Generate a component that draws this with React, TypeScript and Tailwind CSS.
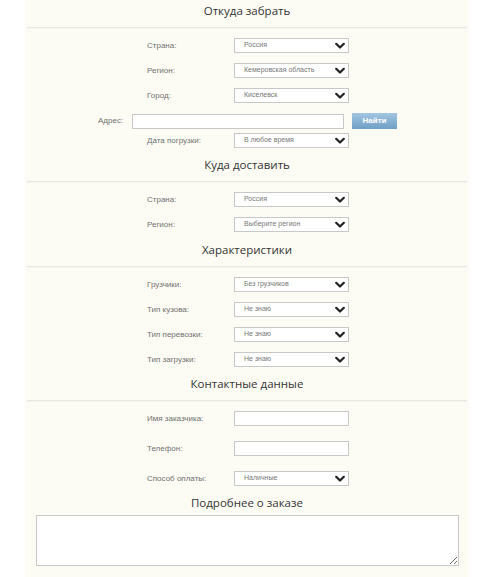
import React from 'react';

const Chevron: React.FC = () => (
  <svg width="10" height="7" viewBox="0 0 10 7" className="absolute right-[3px] top-1/2 -translate-y-1/2">
    <polyline points="1.2,1.2 5,5 8.8,1.2" fill="none" stroke="#222" strokeWidth="2.2" strokeLinecap="round" strokeLinejoin="round" />
  </svg>
);

const Select: React.FC<{ value: string }> = ({ value }) => (
  <div className="relative w-[115px] h-[15px] bg-white border border-[#c8c8c8] flex items-center pl-[9px] text-[7px] text-[#777]">
    <span>{value}</span>
    <Chevron />
  </div>
);

const TextInput: React.FC<{ width?: string; height?: string }> = ({ width = 'w-[115px]', height = 'h-[15px]' }) => (
  <div className={`${width} ${height} bg-white border border-[#c8c8c8]`} />
);

const Label: React.FC<{ text: string }> = ({ text }) => (
  <span className="w-[87px] shrink-0 text-[8px] text-[#707070]">{text}</span>
);

const Row: React.FC<{ label: string; children: React.ReactNode; className?: string }> = ({ label, children, className = '' }) => (
  <div className={`flex items-center h-[15px] pl-[122px] ${className}`}>
    <Label text={label} />
    {children}
  </div>
);

const Title: React.FC<{ text: string; className?: string }> = ({ text, className = '' }) => (
  <div className={className}>
    <div className="h-[22px] flex items-center justify-center text-[11.5px] text-[#333]">{text}</div>
    <div className="mx-[2px] mt-[5px] h-px bg-[#e9e7e0] shadow-[0_1px_0_#f6f4ee]" />
  </div>
);

const sans = { fontFamily: '"Liberation Sans", sans-serif' };

export default function App() {
  return (
    <div className="min-h-[577px] bg-white" style={{ fontFamily: '"Open Sans", "Liberation Sans", sans-serif' }}>
      <div className="ml-[25px] w-[444px] min-h-[577px] bg-[#fdfcf4]">
        {/* Откуда забрать */}
        <Title text="Откуда забрать" />
        <div className="mt-[10px] flex flex-col gap-[10px]" style={sans}>
          <Row label="Страна:"><Select value="Россия" /></Row>
          <Row label="Регион:"><Select value="Кемеровская область" /></Row>
          <Row label="Город:"><Select value="Киселевск" /></Row>
        </div>
        <div className="mt-[10px] flex items-center pl-[73px]" style={sans}>
          <span className="w-[34px] text-[8px] text-[#707070]">Адрес:</span>
          <TextInput width="w-[212px]" />
          <button className="ml-[8px] w-[45px] h-[16px] bg-gradient-to-b from-[#a3c6e0] to-[#6f9fc6] text-white text-[8px] font-bold">
            Найти
          </button>
        </div>
        <div className="mt-[4px]" style={sans}>
          <Row label="Дата погрузки:"><Select value="В любое время" /></Row>
        </div>

        {/* Куда доставить */}
        <Title text="Куда доставить" className="mt-[6px]" />
        <div className="mt-[10px] flex flex-col gap-[10px]" style={sans}>
          <Row label="Страна:"><Select value="Россия" /></Row>
          <Row label="Регион:"><Select value="Выберите регион" /></Row>
        </div>

        {/* Характеристики */}
        <Title text="Характеристики" className="mt-[7px]" />
        <div className="mt-[10px] flex flex-col gap-[10px]" style={sans}>
          <Row label="Грузчики:"><Select value="Без грузчиков" /></Row>
          <Row label="Тип кузова:"><Select value="Не знаю" /></Row>
          <Row label="Тип перевозки:"><Select value="Не знаю" /></Row>
          <Row label="Тип загрузки:"><Select value="Не знаю" /></Row>
        </div>

        {/* Контактные данные */}
        <Title text="Контактные данные" className="mt-[6px]" />
        <div className="mt-[10px] flex flex-col gap-[15px]" style={sans}>
          <Row label="Имя заказчика:"><TextInput /></Row>
          <Row label="Телефон:"><TextInput /></Row>
          <Row label="Способ оплаты:"><Select value="Наличные" /></Row>
        </div>

        {/* Подробнее о заказе */}
        <div className="mt-[6px] h-[22px] flex items-center justify-center text-[11.5px] text-[#333]">Подробнее о заказе</div>
        <div className="mt-px pl-[11px]">
          <textarea className="block w-[423px] h-[51px] bg-white border border-[#c8c8c8] outline-none" />
        </div>
      </div>
    </div>
  );
}
